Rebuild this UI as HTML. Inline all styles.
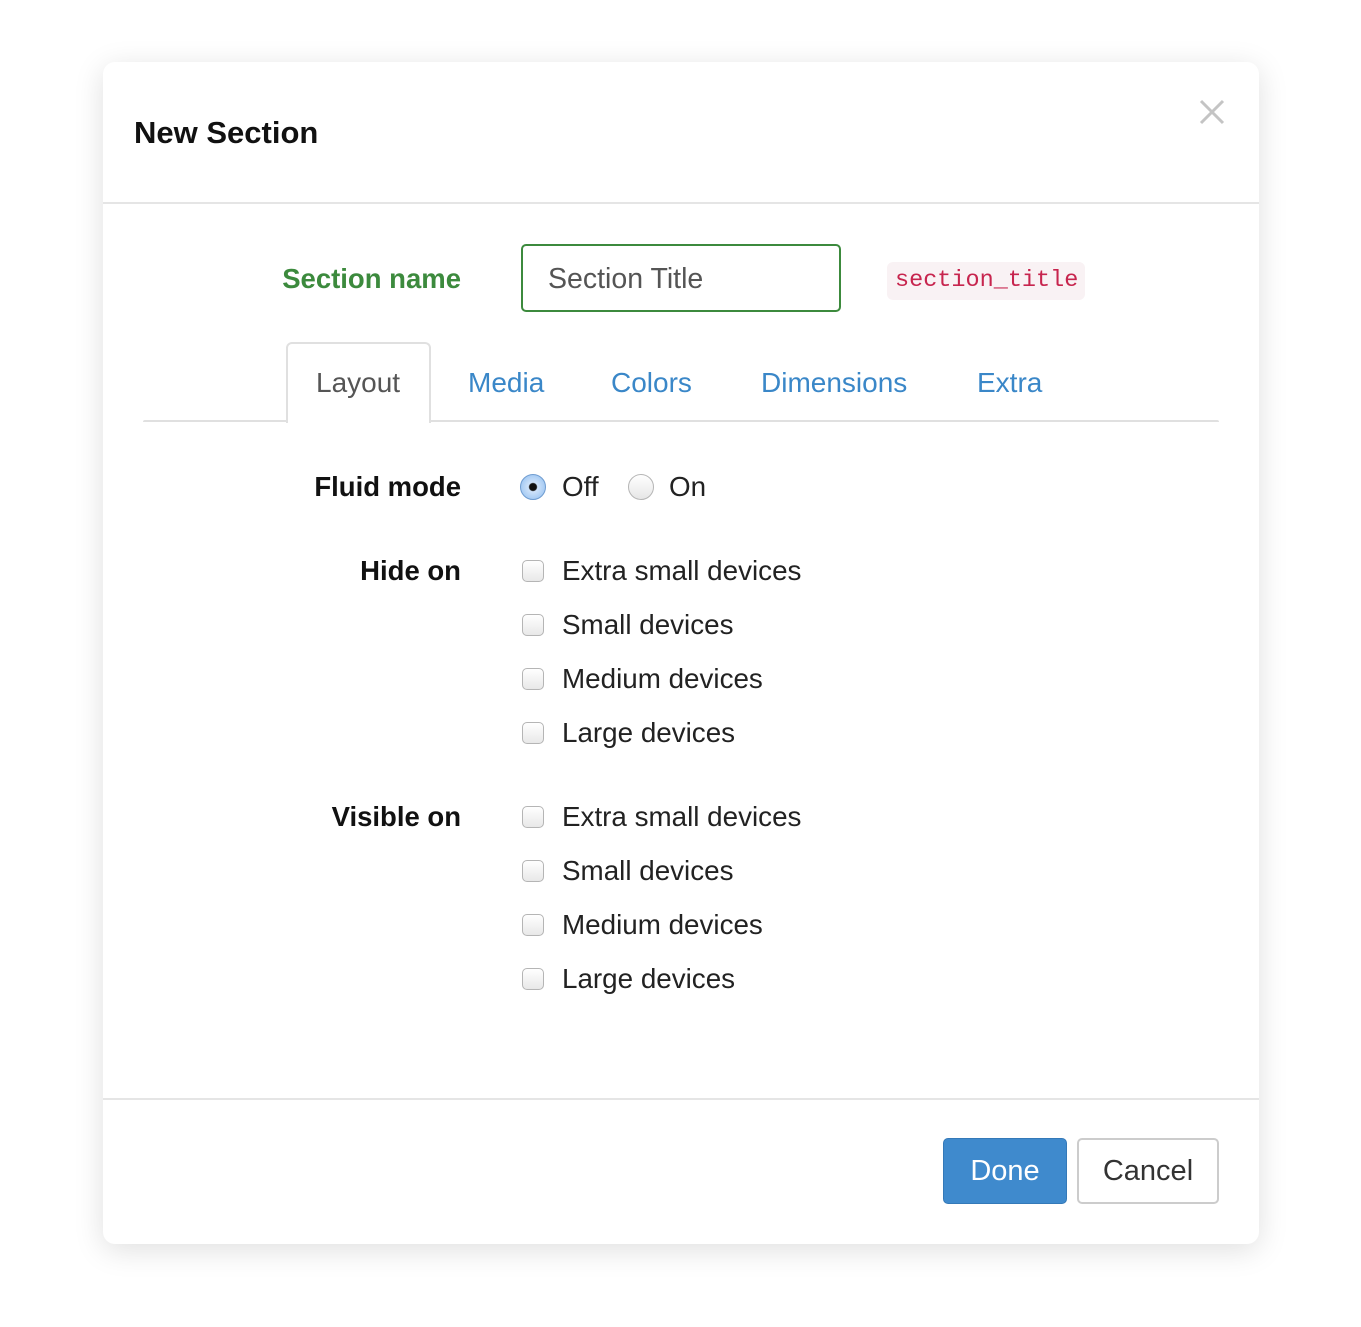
<!DOCTYPE html>
<html><head><meta charset="utf-8"><style>
*{margin:0;padding:0;box-sizing:border-box}
body{width:1361px;height:1327px;background:#fff;font-family:"Liberation Sans",sans-serif;position:relative;overflow:hidden}
.dlg{position:absolute;left:103px;top:62px;width:1156px;height:1182px;background:#fff;border-radius:12px;box-shadow:0 6px 30px rgba(0,0,0,.13)}
.a{position:absolute;white-space:nowrap;line-height:40px;height:40px}
.lbl{position:absolute;right:900px;font-weight:bold;font-size:27.5px;color:#111;line-height:40px;text-align:right;white-space:nowrap}
.cb{position:absolute;left:522px;width:22px;height:22px;border:1px solid #b5b5b5;border-radius:5px;background:linear-gradient(#fff,#e8e8e8)}
.t{position:absolute;left:562px;font-size:27.8px;color:#222;line-height:40px;white-space:nowrap}
.tab{position:absolute;top:363px;font-size:28px;color:#3a87c8;line-height:40px}
</style></head><body>
<div class="dlg"></div>
<div class="a" style="left:134px;top:113px;font-size:31px;font-weight:bold;color:#111">New Section</div>
<svg style="position:absolute;left:1199px;top:99px" width="26" height="26"><path d="M2 2L24 24M24 2L2 24" stroke="#c4c4c4" stroke-width="3"/></svg>
<div style="position:absolute;left:103px;top:202px;width:1156px;height:2px;background:#e5e5e5"></div>
<div class="lbl" style="top:259px;color:#3c8a3d;right:900px">Section name</div>
<div style="position:absolute;left:521px;top:244px;width:320px;height:68px;border:2px solid #3c8a3d;border-radius:5px"></div>
<div class="a" style="left:548px;top:259px;font-size:28.5px;color:#555">Section Title</div>
<div style="position:absolute;left:887px;top:262px;width:198px;height:38px;background:#f9f2f4;border-radius:6px"></div>
<div class="a" style="left:895px;top:261px;font-family:'Liberation Mono',monospace;font-size:23.5px;color:#c7254e">section_title</div>
<div style="position:absolute;left:143px;top:420px;width:1076px;height:2px;background:#e0e0e0;border-radius:6px 6px 0 0"></div>
<div style="position:absolute;left:286px;top:342px;width:145px;height:81px;border:2px solid #e0e0e0;border-bottom:none;border-radius:6px 6px 0 0;background:#fff"></div>
<div class="tab" style="left:316px;color:#555">Layout</div>
<div class="tab" style="left:468px">Media</div>
<div class="tab" style="left:611px">Colors</div>
<div class="tab" style="left:761px">Dimensions</div>
<div class="tab" style="left:977px">Extra</div>
<div class="lbl" style="top:467px">Fluid mode</div>
<div style="position:absolute;left:520px;top:474px;width:26px;height:26px;border-radius:50%;border:1px solid #6f9cd0;background:radial-gradient(circle,#111 0 3.5px,#cfe3fa 4.5px,#8dbcef 100%)"></div>
<div class="t" style="top:467px">Off</div>
<div style="position:absolute;left:628px;top:474px;width:26px;height:26px;border-radius:50%;border:1px solid #b5b5b5;background:linear-gradient(#fff,#e6e6e6)"></div>
<div class="t" style="top:467px;left:669px">On</div>
<div class="lbl" style="top:551px">Hide on</div>
<div class="cb" style="top:560px"></div><div class="t" style="top:551px">Extra small devices</div>
<div class="cb" style="top:614px"></div><div class="t" style="top:605px">Small devices</div>
<div class="cb" style="top:668px"></div><div class="t" style="top:659px">Medium devices</div>
<div class="cb" style="top:722px"></div><div class="t" style="top:713px">Large devices</div>
<div class="lbl" style="top:797px">Visible on</div>
<div class="cb" style="top:806px"></div><div class="t" style="top:797px">Extra small devices</div>
<div class="cb" style="top:860px"></div><div class="t" style="top:851px">Small devices</div>
<div class="cb" style="top:914px"></div><div class="t" style="top:905px">Medium devices</div>
<div class="cb" style="top:968px"></div><div class="t" style="top:959px">Large devices</div>
<div style="position:absolute;left:103px;top:1098px;width:1156px;height:2px;background:#e5e5e5"></div>
<div style="position:absolute;left:943px;top:1138px;width:124px;height:66px;background:#3f8acd;border:1px solid #3479b8;border-radius:5px;color:#fff;font-size:29px;line-height:64px;text-align:center">Done</div>
<div style="position:absolute;left:1077px;top:1138px;width:142px;height:66px;background:#fff;border:2px solid #ccc;border-radius:5px;color:#333;font-size:29px;line-height:62px;text-align:center">Cancel</div>
</body></html>
